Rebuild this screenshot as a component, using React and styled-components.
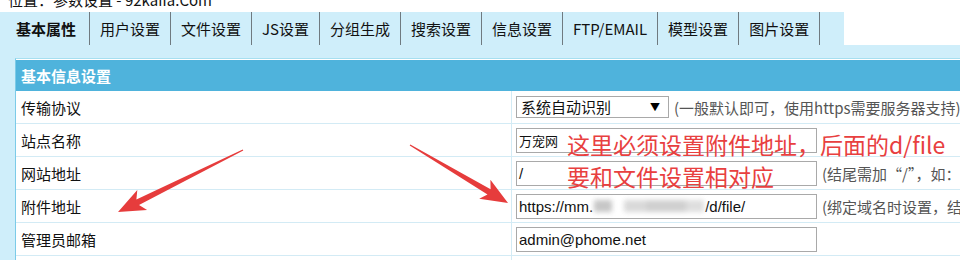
import React from "react";
import styled, { createGlobalStyle } from "styled-components";

const Global = createGlobalStyle`
  html, body { margin: 0; padding: 0; background: #fff; overflow: hidden; }
  body { font-family: "Noto Sans CJK SC", "Noto Sans", sans-serif; color: #111; }
`;

const Page = styled.div`
  position: relative;
  width: 960px;
  height: 260px;
  overflow: hidden;
  background: #fff;
`;

const Crumb = styled.div`
  height: 12px;
  overflow: hidden;
  padding-left: 8px;
`;

const CrumbText = styled.div`
  margin-top: -10px;
  font-size: 15px;
  line-height: 20px;
  white-space: nowrap;
`;

const TabBar = styled.div`
  display: flex;
  height: 33px;
  padding-left: 5px;
  background: linear-gradient(to right, #cfeefa 0 844px, #fff 844px);
`;

const Tab = styled.div`
  display: flex;
  align-items: center;
  padding-left: ${(p) => (p.$first ? "11px" : "10px")};
  padding-right: ${(p) => (p.$first ? "13px" : "10px")};
  border-right: 1px solid #6f7a80;
  background: #cfeefa;
  font-size: 15px;
  font-weight: ${(p) => (p.$active ? 700 : 400)};
  color: #111;
  white-space: nowrap;
`;

const Panel = styled.div`
  background: #cfeefa;
  padding: 13px 0 0 15px;
  height: 215px;
  box-sizing: border-box;
`;

const Table = styled.div`
  width: 1100px;
  border-left: 1px solid #7ccbe8;
  border-top: 1px solid #a6dff0;
  background: #fff;
  padding-top: 1px;
`;

const HeaderRow = styled.div`
  height: 31px;
  display: flex;
  align-items: center;
  padding-left: 5px;
  background: #4fb3dc;
  color: #fff;
  font-size: 15px;
  font-weight: 700;
`;

const Row = styled.div`
  display: grid;
  grid-template-columns: 496px 1fr;
  height: 32px;
  border-bottom: 1px solid #d3ebf5;
`;

const Label = styled.div`
  display: flex;
  align-items: center;
  padding-left: 5px;
  font-size: 15px;
  color: #111;
  border-right: 1px solid #d3ebf5;
`;

const Value = styled.div`
  display: flex;
  align-items: center;
  gap: 5px;
  padding-left: 4px;
  white-space: nowrap;
`;

const SelectBox = styled.div`
  position: relative;
  width: 153px;
  height: 22px;
  box-sizing: border-box;
  border: 1px solid #a9a9a9;
  background: #fff;
  font-size: 15px;
  line-height: 20px;
  padding-left: 4px;
  color: #111;
  &::after {
    content: "▼";
    position: absolute;
    right: 8px;
    top: 0;
    font-size: 10px;
    line-height: 20px;
    color: #000;
  }
`;

const Input = styled.div`
  width: 301px;
  height: 25px;
  box-sizing: border-box;
  border: 1px solid #a9a9a9;
  background: #fff;
  display: flex;
  align-items: center;
  padding-left: 2px;
  font-family: "Liberation Sans", "Noto Sans CJK SC", sans-serif;
  font-size: ${(p) => p.$size || 15}px;
  color: #111;
  overflow: hidden;
`;

const Blur = styled.span`
  display: inline-block;
  width: 110px;
  height: 12px;
  margin: 0 1px;
  background: linear-gradient(
    to right,
    #b8b8b8 0 18px,
    transparent 18px 30px,
    #d0d0d0 30px 52px,
    #c4c4c4 52px 92px,
    #d6d6d6 92px 110px
  );
  filter: blur(2.5px);
  opacity: 0.8;
`;

const Hint = styled.span`
  font-size: 15px;
  color: #555;
`;

const Annotation = styled.div`
  position: absolute;
  left: 567px;
  top: 128px;
  color: #e8403f;
  font-size: 23px;
  font-weight: 400;
  line-height: 32px;
  white-space: nowrap;
  font-family: "Noto Sans CJK SC", sans-serif;
`;

const Overlay = styled.svg`
  position: absolute;
  left: 0;
  top: 0;
  pointer-events: none;
`;

function arrow(x1, y1, x2, y2) {
  const dx = x2 - x1;
  const dy = y2 - y1;
  const L = Math.hypot(dx, dy);
  const ux = dx / L;
  const uy = dy / L;
  const nx = -uy;
  const ny = ux;
  const headLen = 22;
  const headBack = 27;
  const headW = 11;
  const neckW = 3;
  const tailW = 0.6;
  const bx = x2 - ux * headLen;
  const by = y2 - uy * headLen;
  const cx = x2 - ux * headBack;
  const cy = y2 - uy * headBack;
  const pts = [
    [x1 + nx * tailW, y1 + ny * tailW],
    [bx + nx * neckW, by + ny * neckW],
    [cx + nx * headW, cy + ny * headW],
    [x2, y2],
    [cx - nx * headW, cy - ny * headW],
    [bx - nx * neckW, by - ny * neckW],
    [x1 - nx * tailW, y1 - ny * tailW],
  ];
  return pts.map((p) => p.map((v) => v.toFixed(1)).join(",")).join(" ");
}

const tabs = [
  "基本属性",
  "用户设置",
  "文件设置",
  "JS设置",
  "分组生成",
  "搜索设置",
  "信息设置",
  "FTP/EMAIL",
  "模型设置",
  "图片设置",
];

export default function App() {
  return (
    <Page>
      <Global />
      <Crumb>
        <CrumbText>位置：参数设置 - 92kaifa.Com</CrumbText>
      </Crumb>
      <TabBar>
        {tabs.map((t, i) => (
          <Tab key={t} $active={i === 0} $first={i === 0}>
            {t}
          </Tab>
        ))}
      </TabBar>
      <Panel>
        <Table>
          <HeaderRow>基本信息设置</HeaderRow>
          <Row>
            <Label>传输协议</Label>
            <Value>
              <SelectBox>系统自动识别</SelectBox>
              <Hint>(一般默认即可，使用https需要服务器支持)</Hint>
            </Value>
          </Row>
          <Row>
            <Label>站点名称</Label>
            <Value>
              <Input $size={13}>万宠网</Input>
            </Value>
          </Row>
          <Row>
            <Label>网站地址</Label>
            <Value>
              <Input>/</Input>
              <Hint>(结尾需加“/”，如：/d/file/)</Hint>
            </Value>
          </Row>
          <Row>
            <Label>附件地址</Label>
            <Value>
              <Input>
                https://mm.
                <Blur />
                /d/file/
              </Input>
              <Hint>(绑定域名时设置，结尾需加“/”)</Hint>
            </Value>
          </Row>
          <Row>
            <Label>管理员邮箱</Label>
            <Value>
              <Input>admin@phome.net</Input>
            </Value>
          </Row>
          <Row>
            <Label>&nbsp;</Label>
            <Value>
              <Input />
            </Value>
          </Row>
        </Table>
      </Panel>
      <Annotation>
        这里必须设置附件地址，后面的d/file
        <br />
        要和文件设置相对应
      </Annotation>
      <Overlay width="960" height="260" viewBox="0 0 960 260">
        <polygon points={arrow(243, 150, 118, 212)} fill="#e63c3c" />
        <polygon points={arrow(410, 145, 508, 203)} fill="#e63c3c" />
      </Overlay>
    </Page>
  );
}
